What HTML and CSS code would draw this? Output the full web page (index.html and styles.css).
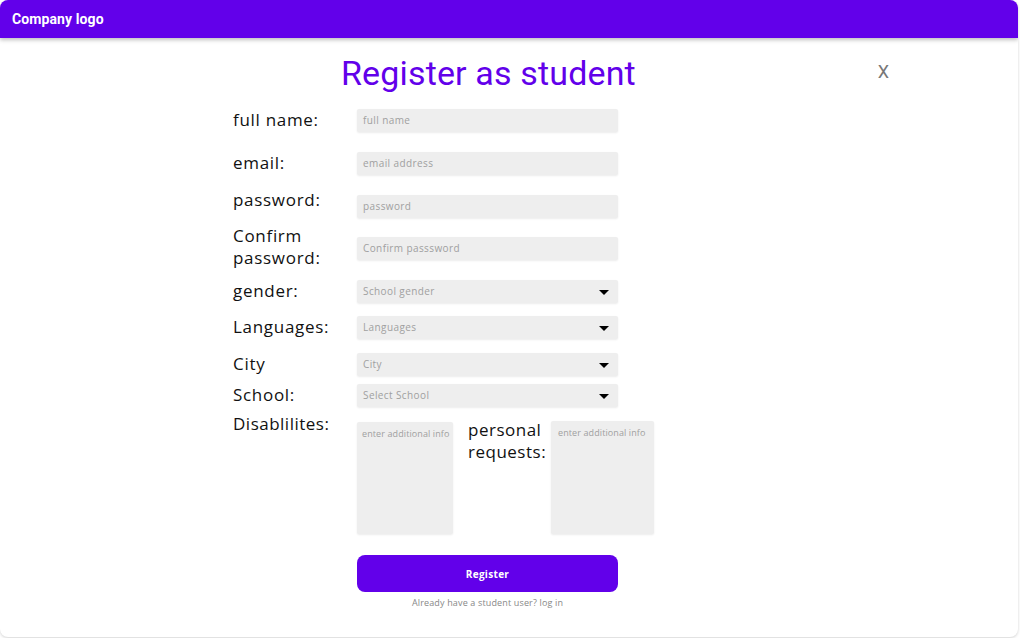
FILE: index.html
```html
<!DOCTYPE html>
<html lang="en">
<head>
<meta charset="utf-8">
<title>Register as student</title>
<link rel="stylesheet" href="styles.css">
</head>
<body>
<div class="card">
  <header class="topbar"><span class="logo">Company logo</span></header>
  <main class="content">
    <div class="title-row">
      <h1 class="title">Register as student</h1>
      <span class="close">X</span>
    </div>
    <form class="form">
      <div class="row r1">
        <label class="lbl">full name:</label>
        <div class="field"><span class="ph">full name</span></div>
      </div>
      <div class="row r2">
        <label class="lbl">email:</label>
        <div class="field"><span class="ph">email address</span></div>
      </div>
      <div class="row r3">
        <label class="lbl lbl-up">password:</label>
        <div class="field"><span class="ph">password</span></div>
      </div>
      <div class="row r4">
        <label class="lbl">Confirm<br>password:</label>
        <div class="field"><span class="ph">Confirm passsword</span></div>
      </div>
      <div class="row r5">
        <label class="lbl">gender:</label>
        <div class="field select"><span class="ph">School gender</span><span class="caret"></span></div>
      </div>
      <div class="row r6">
        <label class="lbl">Languages:</label>
        <div class="field select"><span class="ph">Languages</span><span class="caret"></span></div>
      </div>
      <div class="row r7">
        <label class="lbl">City</label>
        <div class="field select"><span class="ph">City</span><span class="caret"></span></div>
      </div>
      <div class="row r8">
        <label class="lbl">School:</label>
        <div class="field select"><span class="ph">Select School</span><span class="caret"></span></div>
      </div>
      <div class="row r9">
        <label class="lbl lbl-top">Disablilites:</label>
        <div class="area area1"><span class="ph">enter additional info</span></div>
        <label class="lbl lbl-top lbl-req">personal<br>requests:</label>
        <div class="area area2"><span class="ph">enter additional info</span></div>
      </div>
      <div class="actions">
        <button type="button" class="btn">Register</button>
        <p class="login">Already have a student user? log in</p>
      </div>
    </form>
  </main>
</div>
</body>
</html>
```
FILE: styles.css
```css
* { box-sizing: border-box; }
html, body { margin: 0; padding: 0; background: #ffffff; }
body { width: 1020px; height: 638px; overflow: hidden; }

.card {
  width: 1018px;
  height: 637px;
  background: #fff;
  border-radius: 8px;
  box-shadow: 0 1px 3px rgba(0,0,0,0.18);
  overflow: hidden;
}

.topbar {
  height: 38px;
  background: #6200ea;
  display: flex;
  align-items: center;
  padding-left: 12px;
  box-shadow: 0 2px 4px rgba(0,0,0,0.25);
  position: relative;
}
.logo {
  font-family: Roboto, "Liberation Sans", sans-serif;
  font-weight: 700;
  font-size: 14px;
  color: #fff;
  letter-spacing: 0.1px;
}

.content { padding-left: 233px; }

.title-row {
  display: flex;
  align-items: flex-start;
  height: 71px;
}
.title {
  margin: 13px 0 0 108px;
  font-family: Roboto, "Liberation Sans", sans-serif;
  font-weight: 400;
  font-size: 34px;
  line-height: 44px;
  letter-spacing: 0.15px;
  color: #6200ea;
}
.close {
  margin: 23px 0 0 242px;
  font-family: Roboto, "Liberation Sans", sans-serif;
  font-size: 18px;
  color: #777;
}

.form { display: flex; flex-direction: column; }

.row { display: flex; align-items: center; height: 23px; }
.r1 { margin-top: 0; }
.r2 { margin-top: 20px; }
.r3 { margin-top: 20px; }
.r4 { margin-top: 8px; height: 44px; }
.r5 { margin-top: 10px; }
.r6 { margin-top: 13px; }
.r7 { margin-top: 14px; }
.r8 { margin-top: 8px; }
.r9 { margin-top: 14px; height: auto; align-items: flex-start; }

.lbl {
  width: 124px;
  flex: none;
  font-family: "Open Sans", "Noto Sans", sans-serif;
  font-size: 17px;
  line-height: 22px;
  letter-spacing: 0.7px;
  color: #111;
  margin-bottom: 2px;
  white-space: nowrap;
}
.lbl-up { margin-bottom: 13px; }
.lbl-top { margin-top: -8px; letter-spacing: 0.5px; }
.lbl-req { width: 83px; margin-left: 15px; margin-top: -2px; }

.field {
  width: 261px;
  height: 23px;
  background: #eeeeee;
  border-radius: 2px;
  box-shadow: 0 1px 2px rgba(0,0,0,0.08);
  display: flex;
  align-items: center;
  padding: 0 6px;
}
.ph {
  font-family: "Open Sans", "Noto Sans", sans-serif;
  font-size: 10px;
  letter-spacing: 0.4px;
  color: #a0a0a0;
  margin-bottom: 1px;
  white-space: nowrap;
}
.select { justify-content: space-between; padding-right: 9px; }
.caret {
  width: 0; height: 0;
  border-left: 5px solid transparent;
  border-right: 5px solid transparent;
  border-top: 5px solid #000;
  margin-top: 2px;
}

.area {
  height: 113px;
  background: #eeeeee;
  border-radius: 2px;
  box-shadow: 0 1px 2px rgba(0,0,0,0.08);
  padding: 3px 4px;
  line-height: 14px;
  overflow: hidden;
}
.area1 { width: 96px; height: 112px; margin-top: 1px; padding-left: 5px; }
.area2 { width: 103px; padding-left: 7px; }
.area .ph { font-size: 9px; letter-spacing: 0.1px; }

.actions {
  width: 261px;
  margin-left: 124px;
  margin-top: 21px;
  display: flex;
  flex-direction: column;
  align-items: center;
}
.btn {
  width: 261px;
  height: 37px;
  border: none;
  border-radius: 8px;
  background: #6200ea;
  color: #fff;
  font-family: "Open Sans", "Noto Sans", sans-serif;
  font-weight: 700;
  font-size: 10px;
  letter-spacing: 0.3px;
}
.login {
  margin: 4px 0 0 0;
  font-family: "Open Sans", "Noto Sans", sans-serif;
  font-size: 9px;
  letter-spacing: 0.15px;
  color: #888;
}
```
